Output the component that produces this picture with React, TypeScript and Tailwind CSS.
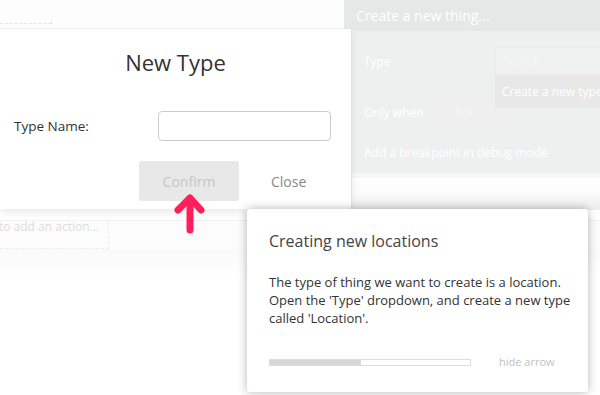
import React from "react";

function PointerArrow() {
  return (
    <svg width="34" height="42" viewBox="0 0 34 42" className="absolute left-[173px] top-[193px]">
      <polyline points="5,17 17,5 28,17" fill="none" stroke="#ff1e5a" strokeWidth="7" strokeLinecap="round" strokeLinejoin="round" />
      <line x1="17" y1="6" x2="17" y2="37" stroke="#ff1e5a" strokeWidth="7" strokeLinecap="round" />
    </svg>
  );
}

export default function App() {
  return (
    <div className="relative h-[395px] w-[600px] overflow-hidden bg-white font-['Open_Sans',sans-serif]">
      {/* editor page behind the overlay */}
      <div className="h-[29px] border-b border-[#efefef] bg-[#fdfdfd]">
        <div className="flex h-[24px] w-[52px] items-end">
          <div className="w-[51px] border-b border-dashed border-[#e6e6e6]" />
          <div className="h-[3px] w-px bg-[#e6e6e6]" />
        </div>
      </div>
      <div className="mt-[191px] h-[29px] border-t border-[#f2f2f2] bg-[#fcfcfc]">
        <div className="flex h-[28px] w-[109px] items-start border-r border-b border-dashed border-[#ececec] text-[12px] leading-[12px] text-[#dcdcdc]">
          <span className="-ml-[1px] whitespace-nowrap">to add an action...</span>
        </div>
      </div>
      <div className="h-[30px] bg-gradient-to-b from-[#fafafa] to-white" />

      {/* property editor (dimmed) */}
      <div className="absolute left-[344px] top-0 w-[256px]">
        <div className="flex h-[31px] items-center bg-[#e6e7e7] pl-[12px] text-[14px] text-white">Create a new thing...</div>
        <div className="h-[142px] bg-[#eeefef] text-[12px] text-white">
          <div className="flex h-[62px] items-center pl-[20px]">Type</div>
          <div className="flex h-[40px] items-center pl-[20px]">
            <span className="w-[67px]">Only when</span>
            <div className="flex h-[30px] w-[70px] items-center bg-[#efefef] pl-[17px] text-[#f6f6f6]">Click</div>
          </div>
          <div className="flex h-[40px] items-center pl-[20px]">Add a breakpoint in debug mode</div>
        </div>
        <div className="h-[5px] bg-[#f7f7f7]" />
        <div className="h-[32px] bg-gradient-to-b from-white via-[#fbfbfb] to-[#ececec]" />
        {/* dropdown */}
        <div className="absolute left-[151px] top-[47px] w-[110px]">
          <div className="flex h-[28px] items-center border border-[#f1e6e8] bg-[#eff0f0] pl-[7px] text-[12px] text-[#f7f7f7]">Search...</div>
          <div className="flex h-[33px] items-center bg-[#e8e8e8] pl-[7px] text-[12px] text-white whitespace-nowrap">Create a new type</div>
        </div>
      </div>

      {/* New Type modal */}
      <div className="absolute left-0 top-[29px] flex h-[180px] w-[352px] flex-col border-r border-[#e2e2e2] bg-white shadow-[0_4px_8px_rgba(0,0,0,0.08)]">
        <div className="pt-[18px] text-center text-[22px] leading-[30px] text-[#333]">New Type</div>
        <div className="mt-[34px] flex items-center">
          <span className="w-[158px] pl-[14px] text-[13.5px] text-[#333]">Type Name:</span>
          <div className="h-[30px] w-[173px] rounded-[4px] border border-[#cccccc] bg-white" />
        </div>
        <div className="mt-[20px] flex items-center">
          <div className="ml-[139px] flex h-[40px] w-[100px] items-center justify-center rounded-[3px] bg-[#e8e8e8] text-[14px] text-[#c6c6c6]">Confirm</div>
          <span className="ml-[32px] text-[14px] text-[#888]">Close</span>
        </div>
      </div>

      <PointerArrow />

      {/* lesson tooltip */}
      <div className="absolute left-[247px] top-[209px] h-[183px] w-[341px] rounded-[3px] bg-white pl-[22px] pt-[22px] shadow-[0_0_10px_rgba(0,0,0,0.3)]">
        <div className="text-[16px] leading-[20px] text-[#444]">Creating new locations</div>
        <div className="mt-[22px] w-[310px] text-[13px] leading-[18px] text-[#333]">
          The type of thing we want to create is a location. Open the 'Type' dropdown, and create a new type called 'Location'.
        </div>
        <div className="mt-[27px] flex items-center">
          <div className="h-[7px] w-[202px] border border-[#dcdcdc] bg-white">
            <div className="h-full w-[91px] bg-[#d7d7d7]" />
          </div>
          <span className="ml-[28px] text-[11px] text-[#b9c3c7]">hide arrow</span>
        </div>
      </div>
    </div>
  );
}
